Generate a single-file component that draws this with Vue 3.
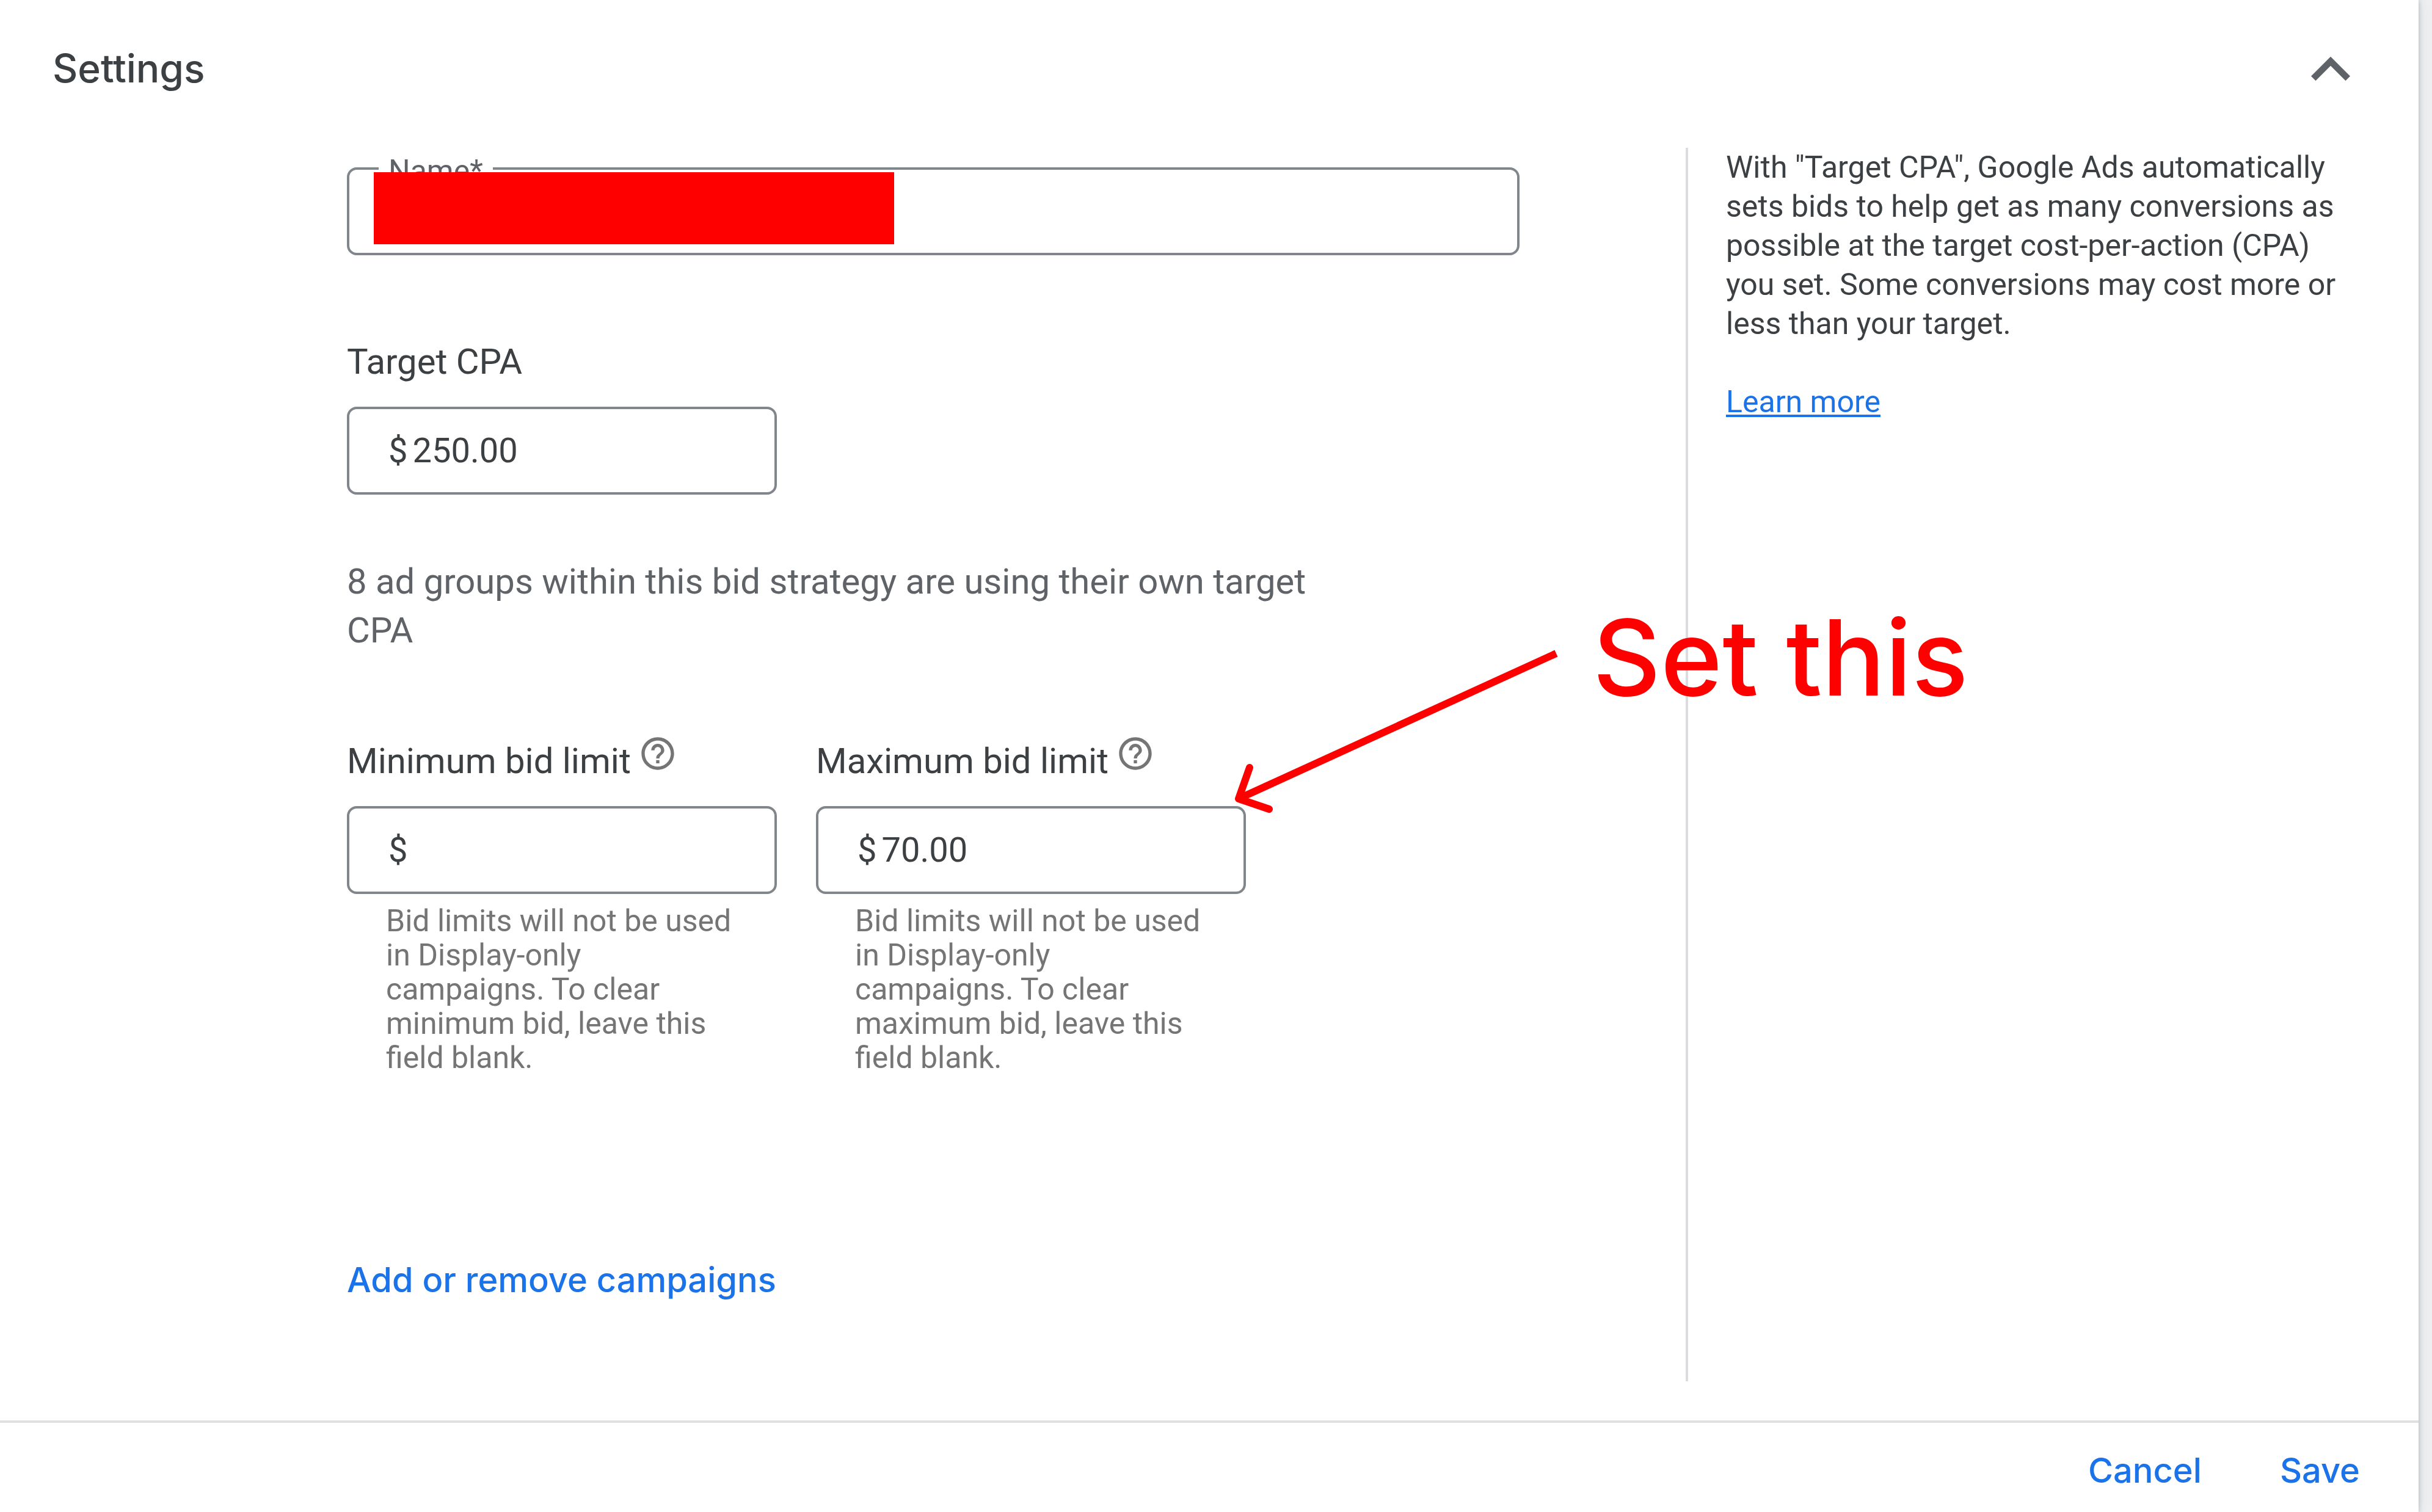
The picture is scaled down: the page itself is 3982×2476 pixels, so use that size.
<script setup>
import { ref } from 'vue'

const name = ref('')
const targetCpa = ref('250.00')
const limits = ref([
  { id: 'min-bid', label: 'Minimum bid limit', word: 'minimum', value: '' },
  { id: 'max-bid', label: 'Maximum bid limit', word: 'maximum', value: '70.00' },
])
</script>

<template>
  <div class="page">
    <section class="card">
      <header class="card-header">
        <h1>Settings</h1>
        <button class="icon-button" type="button" aria-label="Collapse settings">
          <svg class="chevron" viewBox="0 0 24 24" aria-hidden="true">
            <path d="M12 8l-6 6 1.41 1.41L12 10.83l4.59 4.58L18 14z" />
          </svg>
        </button>
      </header>

      <div class="content">
        <form class="form" @submit.prevent>
          <div class="name-field">
            <input id="name" v-model="name" class="box name-input" type="text" />
            <label for="name" class="name-label">Name*</label>
            <span class="redaction"></span>
          </div>

          <div class="field target">
            <label for="target-cpa" class="label">Target CPA</label>
            <div class="box money">
              <span>$</span>
              <input id="target-cpa" v-model="targetCpa" type="text" />
            </div>
          </div>

          <p class="note">8 ad groups within this bid strategy are using their own target CPA</p>

          <div class="limits">
            <div v-for="limit in limits" :key="limit.id" class="field">
              <div class="label-row">
                <label :for="limit.id" class="label">{{ limit.label }}</label>
                <svg class="help" viewBox="0 0 24 24" aria-hidden="true">
                  <path d="M11 18h2v-2h-2v2zm1-16C6.48 2 2 6.48 2 12s4.48 10 10 10 10-4.48 10-10S17.52 2 12 2zm0 18c-4.41 0-8-3.59-8-8s3.59-8 8-8 8 3.59 8 8-3.59 8-8 8zm0-14c-2.21 0-4 1.79-4 4h2c0-1.1.9-2 2-2s2 .9 2 2c0 2-3 1.75-3 5h2c0-2.25 3-2.5 3-5 0-2.21-1.79-4-4-4z" />
                </svg>
              </div>
              <div class="box money">
                <span>$</span>
                <input :id="limit.id" v-model="limit.value" type="text" />
              </div>
              <p class="hint">
                Bid limits will not be used in Display-only campaigns. To clear
                {{ limit.word }} bid, leave this field blank.
              </p>
            </div>
            <svg class="arrow" viewBox="0 0 540 290" aria-hidden="true">
              <path d="M530 22 L10 260" />
              <path class="head" d="M28 209 L10 260 L60 277" />
            </svg>
            <strong class="callout">Set this</strong>
          </div>

          <button class="text-button campaigns" type="button">Add or remove campaigns</button>
        </form>

        <aside class="info">
          <p>
            With "Target CPA", Google Ads automatically sets bids to help get as many conversions as
            possible at the target cost-per-action (CPA) you set. Some conversions may cost more or
            less than your target.
          </p>
          <a href="#learn-more">Learn more</a>
        </aside>
      </div>

      <footer class="actions">
        <button class="text-button" type="button">Cancel</button>
        <button class="text-button" type="button">Save</button>
      </footer>
    </section>
  </div>
</template>

<style>
body {
  margin: 0;
  background: #eef0f2;
}
</style>

<style scoped>
.page {
  box-sizing: border-box;
  min-height: 100vh;
  padding-right: 22px;
  display: flex;
  overflow: hidden;
  font-family: Roboto, "Liberation Sans", sans-serif;
  color: #3c4043;
}

.card {
  flex: 1;
  display: flex;
  flex-direction: column;
  background: #fff;
  box-shadow: 0 0 8px rgba(60, 64, 67, 0.3), 0 0 24px rgba(60, 64, 67, 0.1);
}

.card-header {
  display: flex;
  align-items: center;
  justify-content: space-between;
  height: 242px;
  box-sizing: border-box;
  padding: 0 80px 14px 86px;
}

h1 {
  margin: 0;
  padding-bottom: 4px;
  font: 500 64px/80px Inter, sans-serif;
}

button {
  padding: 0;
  border: 0;
  background: none;
  cursor: pointer;
}

.icon-button,
.chevron {
  display: block;
  width: 128px;
  height: 128px;
}

.chevron {
  fill: #5f6368;
}

.content {
  flex: 1;
  display: grid;
  grid-template-columns: minmax(0, 1fr) 1200px;
}

.form {
  padding: 32px 272px 96px 568px;
}

.box {
  box-sizing: border-box;
  height: 144px;
  border: 4px solid #80868b;
  border-radius: 16px;
  background: #fff;
}

.name-field {
  position: relative;
}

.name-input {
  display: block;
  width: 100%;
  padding: 0 64px;
  font: 56px Roboto, sans-serif;
}

.name-label {
  position: absolute;
  top: -26px;
  left: 52px;
  padding: 0 16px;
  background: #fff;
  font-size: 50px;
  line-height: 64px;
  color: #5f6368;
}

.redaction {
  position: absolute;
  top: 8px;
  left: 44px;
  width: 852px;
  height: 118px;
  background: #f00;
}

.field {
  width: 704px;
}

.target {
  margin-top: 136px;
}

.label {
  display: block;
  font-size: 58px;
  line-height: 76px;
}

.target .label {
  margin-bottom: 36px;
}

.money {
  display: flex;
  align-items: center;
  padding: 0 64px;
  font-size: 56px;
}

.money input {
  flex: 1;
  min-width: 0;
  padding: 0;
  margin-left: 8px;
  border: 0;
  outline: 0;
  background: none;
  font: inherit;
  color: inherit;
}

.note {
  max-width: 1600px;
  margin: 102px 0 0;
  font-size: 58px;
  line-height: 80px;
  color: #5f6368;
}

.limits {
  position: relative;
  display: flex;
  gap: 64px;
  margin-top: 128px;
}

.label-row {
  display: flex;
  align-items: flex-start;
  gap: 12px;
  margin-bottom: 36px;
}

.label-row .label {
  padding-top: 8px;
}

.help {
  width: 64px;
  height: 64px;
  margin-top: 2px;
  fill: #757575;
}

.hint {
  margin: 16px 64px 0;
  font-size: 50px;
  line-height: 56px;
  color: #757575;
}

.arrow {
  position: absolute;
  top: -152px;
  left: 1450px;
  width: 540px;
  height: 290px;
  fill: none;
  stroke: #f00;
  stroke-width: 12px;
}

.head {
  stroke-linecap: round;
  stroke-linejoin: round;
}

.callout {
  position: absolute;
  top: -224px;
  left: 2040px;
  font: 500 172px/200px Inter, sans-serif;
  color: #f00;
  white-space: nowrap;
}

.text-button {
  font: 500 56px/80px Inter, sans-serif;
  color: #1a73e8;
}

.campaigns {
  display: block;
  margin-top: 296px;
}

.info {
  padding: 0 112px 0 62px;
  border-left: 4px solid #dadce0;
  font-size: 50px;
  line-height: 64px;
}

.info p {
  margin: 0 0 64px;
}

.info a {
  color: #1a73e8;
  text-decoration-thickness: 4px;
  text-underline-offset: 4px;
}

.actions {
  display: flex;
  justify-content: flex-end;
  gap: 128px;
  margin-top: 64px;
  padding: 38px 96px 28px;
  border-top: 4px solid #e0e0e0;
}
</style>
